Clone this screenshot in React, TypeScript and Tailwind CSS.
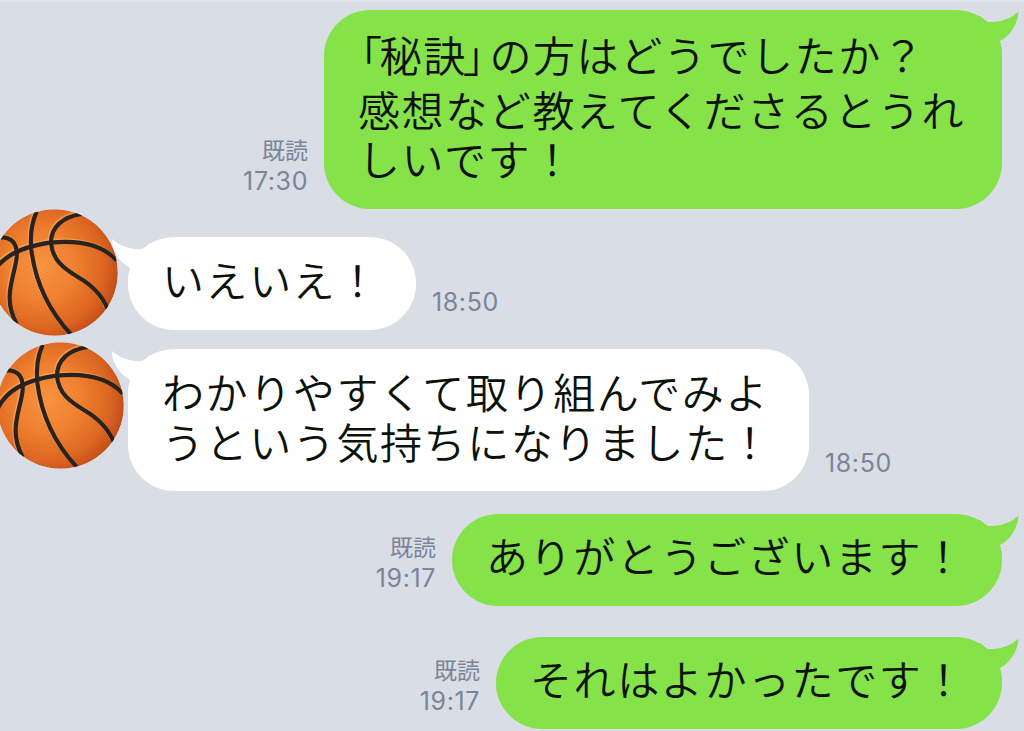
import clsx from "clsx";
import type { ReactNode } from "react";

type Message = {
  id: number;
  mine: boolean;
  time: string;
  lines: ReactNode[];
  row: string;
  bubble: string;
  avatar?: string;
};

const messages: Message[] = [
  {
    id: 1,
    mine: true,
    time: "17:30",
    lines: [
      <>
        <span className="ml-[3px] -mr-1 [font-feature-settings:'halt']">「</span>秘訣
        <span className="-ml-1 mr-1 [font-feature-settings:'halt']">」</span>の方はどうでしたか？
      </>,
      "感想など教えてくださるとうれ",
      "しいです！",
    ],
    row: "h-[199px]",
    bubble: "w-[678px] pt-[19px] [&_p:first-of-type]:mb-[5px]",
  },
  {
    id: 2,
    mine: false,
    time: "18:50",
    lines: ["いえいえ！"],
    row: "mt-7 h-[93px]",
    bubble: "w-[288px] pt-[17px]",
    avatar: "-ml-[9px] -mt-7",
  },
  {
    id: 3,
    mine: false,
    time: "18:50",
    lines: ["わかりやすくて取り組んでみよ", "うという気持ちになりました！"],
    row: "mt-[19px] h-[142px]",
    bubble: "w-[681px] pt-[17px]",
    avatar: "-ml-[3px] -mt-[7px]",
  },
  {
    id: 4,
    mine: true,
    time: "19:17",
    lines: ["ありがとうございます！"],
    row: "mt-[23px] h-[92px]",
    bubble: "w-[550px] pt-4",
  },
  {
    id: 5,
    mine: true,
    time: "19:17",
    lines: ["それはよかったです！"],
    row: "mt-[31px] h-[92px]",
    bubble: "w-[506px] pt-4",
  },
];

export default function App() {
  return (
    <main className="h-[731px] w-[1024px] overflow-hidden border-t-2 border-[#e1e5f0] bg-[#d8dde6] pt-2 font-['Inter','Noto_Sans_CJK_JP',sans-serif]">
      {messages.map((message) => (
        <MessageRow key={message.id} message={message} />
      ))}
    </main>
  );
}

function MessageRow({ message }: { message: Message }) {
  const { mine, time, lines, row, bubble, avatar } = message;

  return (
    <div className={clsx("flex", mine && "justify-end pr-[22px]", row)}>
      {mine ? (
        <Meta time={time} read />
      ) : (
        <div className="w-32 shrink-0">
          <Basketball className={avatar} />
        </div>
      )}
      <div
        className={clsx(
          "relative h-full shrink-0 rounded-[46px] pl-[34px] font-['Noto_Sans_CJK_JP',sans-serif] text-[42px] font-[350] leading-[49.5px] tracking-[1.6px] text-[#0c120a]",
          mine ? "bg-[#85e249]" : "bg-white",
          bubble,
        )}
      >
        <Tail mine={mine} />
        {lines.map((text, index) => (
          <p key={index} className="whitespace-nowrap">
            {text}
          </p>
        ))}
      </div>
      {!mine && <Meta time={time} />}
    </div>
  );
}

function Meta({ time, read = false }: { time: string; read?: boolean }) {
  return (
    <div
      className={clsx(
        "flex flex-col justify-end pb-[13px] text-[#7b8599]",
        read ? "items-end pr-4" : "pl-4",
      )}
    >
      {read && (
        <span className="font-['Noto_Sans_CJK_JP',sans-serif] text-[23px] leading-[34px]">既読</span>
      )}
      <span className="text-[25px] leading-[30px] tracking-[0.6px]">{time}</span>
    </div>
  );
}

function Tail({ mine }: { mine: boolean }) {
  return (
    <svg
      className={clsx(
        "absolute top-0 h-[46px] w-[46px]",
        mine ? "-right-[18px] text-[#85e249]" : "-left-[18px] -scale-x-100 text-white",
      )}
      viewBox="0 0 46 46"
      fill="currentColor"
    >
      <path d="M6 6 Q10 10 14 12 C25 12.5 37 9 44.5 1.5 C44 13 37 25 26 31 Q28 38 28 44 L0 44 L0 6 Z" />
    </svg>
  );
}

function Basketball({ className }: { className?: string }) {
  return (
    <svg className={clsx("block h-[127px] w-[127px] max-w-none", className)} viewBox="-27 27 381 381">
      <defs>
        <radialGradient id="ball" cx="0.4" cy="0.45" r="0.62">
          <stop offset="0" stopColor="#fb9643" />
          <stop offset="0.45" stopColor="#f0812f" />
          <stop offset="0.8" stopColor="#dc6521" />
          <stop offset="1" stopColor="#bf4c17" />
        </radialGradient>
        <pattern id="grain" width="12" height="14" patternUnits="userSpaceOnUse" patternTransform="rotate(18)">
          <circle cx="3" cy="3" r="2.2" fill="#c4521b" fillOpacity="0.28" />
          <circle cx="9" cy="10" r="2.2" fill="#c4521b" fillOpacity="0.28" />
        </pattern>
        <clipPath id="round">
          <circle cx="163.5" cy="217.5" r="190" />
        </clipPath>
      </defs>
      <g clipPath="url(#round)">
        <circle cx="163.5" cy="217.5" r="190" fill="url(#ball)" />
        <circle cx="163.5" cy="217.5" r="190" fill="url(#grain)" />
        {/* light edge along each seam */}
        <Seams stroke="#ffb066" strokeOpacity="0.55" transform="translate(-4 -4)" />
        <Seams stroke="#29231f" />
      </g>
    </svg>
  );
}

function Seams(props: React.SVGProps<SVGGElement>) {
  return (
    <g fill="none" strokeWidth="12.5" {...props}>
      <path d="M-30 240 C-10 180 50 142 150 128 C230 120 305 130 350 182" />
      <path d="M110 35 C92 75 90 110 94 150 C106 245 145 330 212 402" />
      <path d="M245 42 C190 50 152 80 153 130 C158 180 190 205 235 232 C280 258 305 285 322 325" />
      <path d="M0 112 C38 110 52 133 50 170 C45 230 5 290 50 372" />
    </g>
  );
}
